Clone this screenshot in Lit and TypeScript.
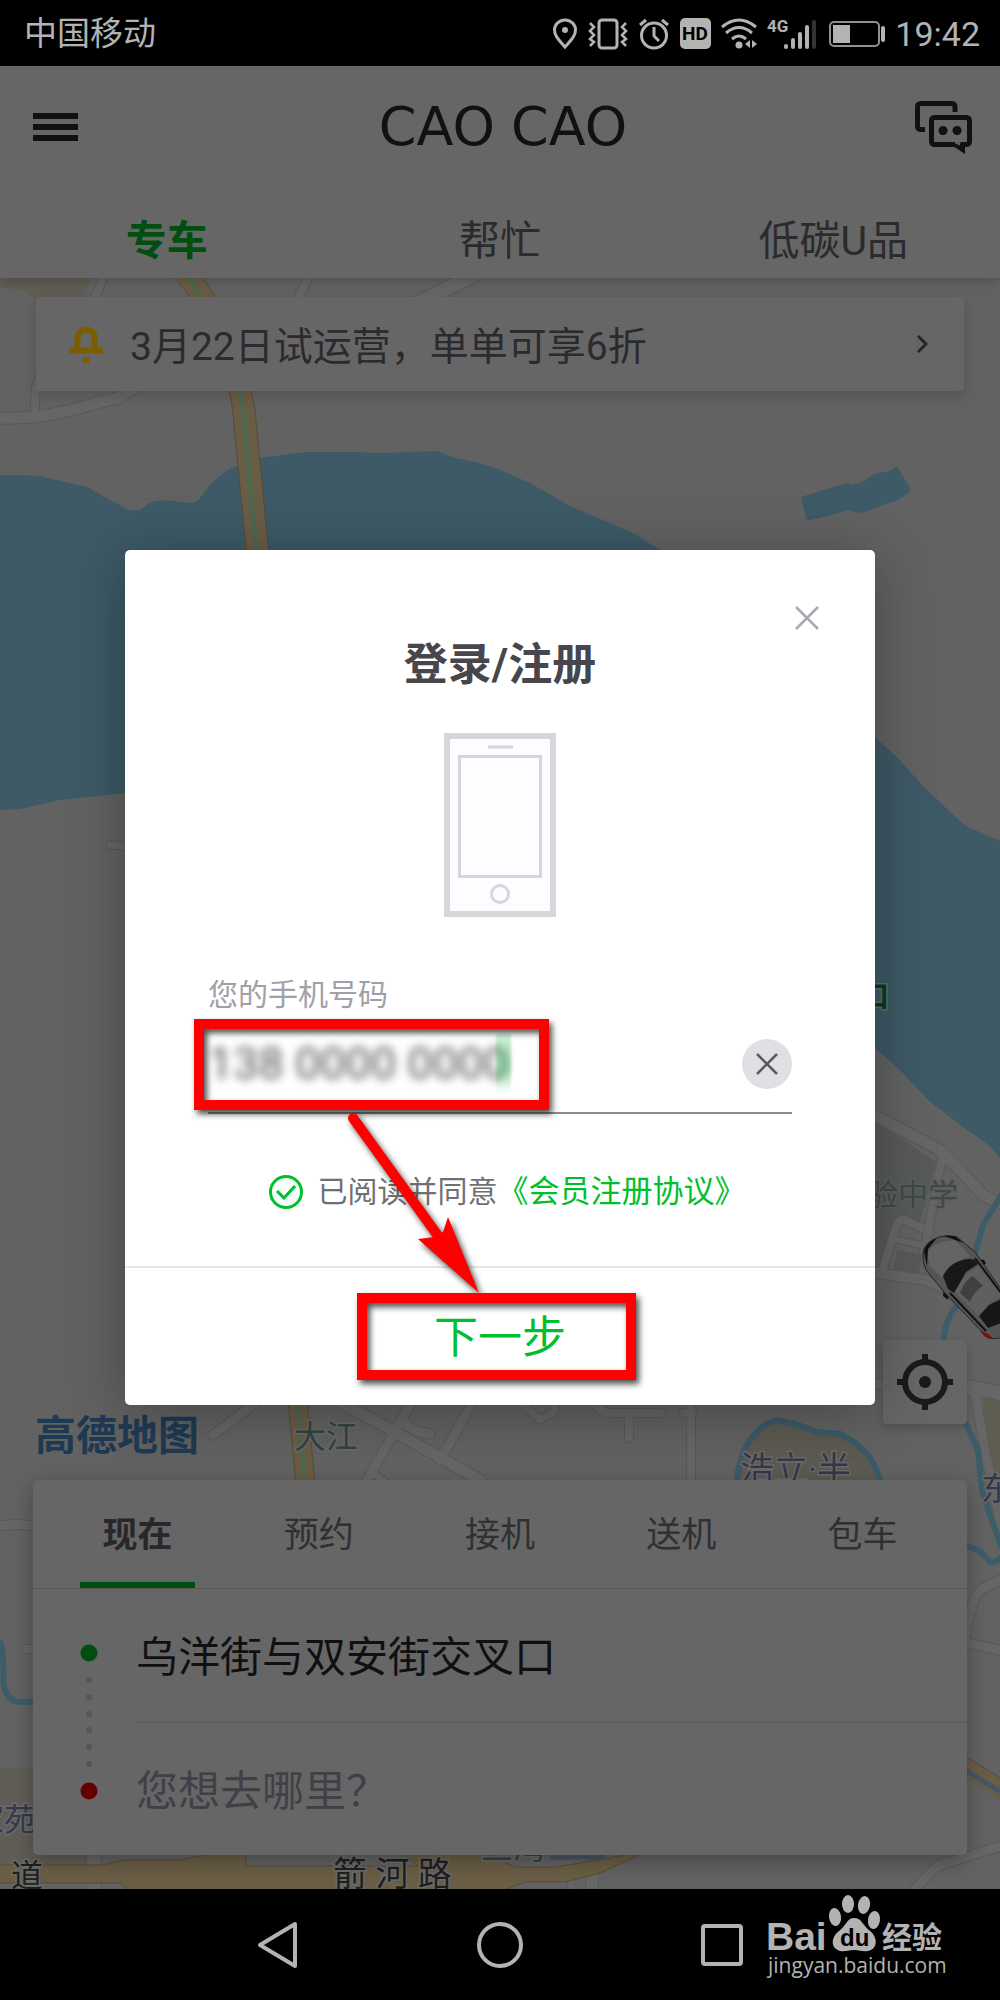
import { LitElement, html, svg, css } from "lit";
import { customElement, state } from "lit/decorators.js";
import { classMap } from "lit/directives/class-map.js";

const ROADS: Array<[string, number]> = [
  ["M106 270 93 304", 8],
  ["M308 270C309 285 300 288 297 304", 8],
  ["M484 270 420 302", 14],
  ["M48 370C34 378 35 392 35 414", 8],
  ["M-4 418C60 420 90 402 118 398L150 378", 11],
  ["M-4 1526C20 1524 26 1524 40 1527", 9],
  ["M110 845 134 847", 7],
  ["M26 1649H40", 8],
  ["M262 1398 213 1435", 9],
  ["M336 1400 395 1432 480 1480", 11],
  ["M413 1400 366 1482", 9],
  ["M374 1474 388 1484", 7],
  ["M402 1423 416 1431 430 1434", 9],
  ["M474 1400 440 1460", 9],
  ["M518 1400 540 1420 554 1412 556 1400", 7],
  ["M594 1404Q602 1413 612 1413H661", 8],
  ["M629 1413V1438", 8],
  ["M684 1413H692", 8],
  ["M691 1400V1484", 8],
  ["M868 1112 940 1150 960 1170 984 1196 1004 1204", 11],
  ["M942 1158 924 1252", 8],
  ["M882 1272 897 1224Q899 1219 905 1220L930 1232", 8],
  ["M898 1240 926 1246", 6],
  ["M868 1272 925 1280 950 1290", 10],
  ["M868 1383 890 1386", 9],
  ["M962 1386 1004 1394", 14],
  ["M975 1394 985 1450 1004 1540", 9],
  ["M1004 1578 982 1589Q976 1592 972 1606L964 1640", 9],
  ["M962 1642 1004 1651", 9],
  ["M912 1892 936 1867Q940 1864 950 1862L1004 1845", 9],
  ["M94 1850V1892", 14],
  ["M570 1880 574 1894", 7],
  ["M592 1872V1894", 11],
];

const TOP_TABS = ["专车", "帮忙", "低碳U品"];
const RIDE_TABS = ["现在", "预约", "接机", "送机", "包车"];

@customElement("city-map")
class CityMap extends LitElement {
  static styles = css`
    :host { display: block; overflow: hidden; background: #626262; }
    .canvas { display: block; width: 100%; height: 100%; }
    .label { font: 32px Roboto, "Noto Sans CJK SC", sans-serif; paint-order: stroke; stroke: #6a6a6a; stroke-width: 3px; }
    .green { fill: #34423f; }
    .violet { fill: #353849; }
    .dark { fill: #1f1f1f; }
    .wide { font-size: 34px; }
    .small { font-size: 30px; fill: #3d4a49; stroke: #5c5f5e; }
    .gate { font-size: 29px; font-weight: 700; fill: #003d22; }
  `;
  render() {
    return html`
      <svg class="canvas" viewBox="0 278 1000 1611" preserveAspectRatio="xMidYMid slice" aria-hidden="true">
        <path fill="#605d54" d="M0 278H92L80 300H36L24 290 0 287z" />
        <path fill="#605d56" d="M0 1768H40L86 1855V1865H0z" />
        <path fill="#575a58" d="M870 1118 936 1162 920 1222 894 1220 878 1268 870 1268z" />
        <path fill="#585a59" d="M897 1250 922 1254 918 1280 892 1277z" />
        <path fill="#5f5c50" d="M983 1397 1000 1403V1500L990 1460z" />
        <g fill="#3d5a66">
          <path d="M0 475C30 475 38 475 48 478L87 487 128 510H140C148 505 148 502 158 501 175 499 186 505 195 502 204 496 206 488 212 483 220 475 226 470 237 466L260 458 305 452 355 452 380 453 437 451 455 458 480 463 500 470 530 483 570 506 605 521 635 534 660 550 875 737 900 760Q920 784 942 804 960 822 968 827L1000 841V1158L990 1146 963 1127 929 1101 900 1070 875 1048 600 930 125 793 60 800 20 809 0 810z" />
          <path d="M801 497 847 483 852 485 862 482 875 474Q882 471 888 472L897 466 911 490Q905 497 895 501L880 506Q870 511 860 513L847 510 835 514 807 521z" />
        </g>
        <path fill="#5c5a51" stroke="#3b5a67" stroke-width="6" d="M736 1486C740 1450 748 1438 766 1424L778 1420 795 1424 817 1432 840 1434C868 1448 876 1464 882 1486" />
        <g fill="none" stroke-linejoin="round">
          ${ROADS.map(([d, w]) => svg`<path d=${d} stroke="#585858" stroke-linecap="round" stroke-width=${w + 2} />`)}
          ${ROADS.map(([d, w]) => svg`<path d=${d} stroke="#666" stroke-linecap="round" stroke-width=${w} />`)}
          <g stroke="#3d5c69" stroke-width="6">
            <path d="M1002 1194 983 1225 973 1260 957 1306Q945 1318 943 1345" />
            <path d="M962 1415 978 1450 982 1490 990 1515 1002 1548" />
            <path d="M962 1544 980 1551 990 1562Q994 1564 1002 1556" />
            <path d="M0 1640C6 1665 2 1675 4 1686Q8 1702 20 1702H40" />
          </g>
        </g>
        <g fill="#6a5d45" stroke="#584b38">
          <path d="M172 274H200L218 300H193z" />
          <path d="M228 384H250L255 410 269 556H247L232 405z" />
          <path d="M288 1400H307L315 1484H296z" />
          <path d="M-2 1865H102L122 1860H180L220 1852H246V1866H418L400 1850H480L515 1867H555Q600 1860 650 1850L600 1873 565 1882H525L500 1892H132L120 1883H-2z" />
          <path d="M960 1753 1004 1780V1795L960 1768z" />
        </g>
        <g fill="none">
          <path stroke="#4b6850" stroke-width="4" d="M186 272 202 300M239 388 243 410 257 556M297 1400 305 1484" />
          <path stroke="#485565" stroke-width="5" d="M960 1767 1004 1794M550 1857H605" />
          <path stroke="#6a5d45" stroke-width="4" d="M960 1773 1004 1800" />
        </g>
        <text class="label green" x="294" y="1448">大江</text>
        <text class="label violet wide" x="740" y="1481">浩立·半</text>
        <text class="label violet" x="981" y="1500">东</text>
        <text class="label small" x="868" y="1205">验中学</text>
        <text class="label gate" x="860" y="1007">口</text>
        <text class="label violet" x="-28" y="1831">家苑</text>
        <text class="label dark" x="11" y="1887">道</text>
        <text class="label dark wide" x="333" y="1886">箭 河 路</text>
        <text class="label green" x="481" y="1859">三湾</text>
        <g>
          <path fill="#111" d="M944 1287 949 1292 948 1300 943 1296zM976 1259 984 1260 986 1264 978 1266z" />
          <path fill="#555" stroke="#242424" d="M923 1252Q925 1242 939 1237 948 1234 957 1237L975 1252 1010 1302V1334Q1000 1340 988 1338L944 1292 926 1270Q922 1262 923 1252z" />
          <path fill="#646464" d="M927 1254Q930 1246 941 1242L955 1240 970 1256 950 1266 942 1278 930 1266z" />
          <path fill="#111" d="M924 1252Q925 1243 937 1238L928 1249 927 1266zM943 1236 955 1236 963 1243 950 1238z" />
          <path fill="#16181a" d="M943 1276Q948 1266 957 1262 968 1257 975 1260L978 1264 966 1272 954 1293 948 1289z" />
          <path fill="#5f5f5f" d="M955 1292 966 1274 978 1266 1002 1296 990 1303 979 1317z" />
          <path fill="#404040" d="M960 1293Q964 1281 973 1276L983 1286Q975 1290 970 1302z" />
          <path fill="#141618" d="M979 1316 989 1305 1004 1298V1322L988 1328z" />
          <path fill="none" stroke="#111" stroke-width="2" d="M975 1258 1002 1294M950 1293 986 1331" />
          <path fill="#7a0f14" d="M980 1331 987 1333 994 1339 985 1337z" />
        </g>
      </svg>
    `;
  }
}

@customElement("status-bar")
class StatusBar extends LitElement {
  static styles = css`
    :host { display: flex; align-items: center; justify-content: space-between; height: 66px; padding: 2px 20px 0 24px; box-sizing: border-box; background: #000; color: #b3b3b3; font: 33px/40px Roboto, "Noto Sans CJK SC", sans-serif; }
    .tray { display: flex; align-items: center; gap: 10px; }
    .time { font-size: 34px; }
    svg { display: block; }
    .badge { font: 700 19px Roboto, sans-serif; }
    .net { font: 700 17px Roboto, sans-serif; }
  `;
  render() {
    return html`
      <span>中国移动</span>
      <div class="tray">
        <svg width="26" height="32" viewBox="0 0 26 32" aria-hidden="true">
          <path fill="none" stroke="#b3b3b3" stroke-width="3" d="M13 29C7 22 2.500 18 2.500 12a10.500 10 0 0 1 21 0C23.500 18 19 22 13 29z" /><circle cx="13" cy="12" r="3" fill="#b3b3b3" />
        </svg>
        <svg width="40" height="32" viewBox="0 0 40 32" fill="none" stroke="#b3b3b3" stroke-width="3" aria-hidden="true">
          <rect x="11" y="2" width="18" height="28" rx="3" /><path stroke-width="2.500" d="M2 5l4 4-4 4 4 4-4 4 4 3-4 4M38 5l-4 4 4 4-4 4 4 4-4 3 4 4" />
        </svg>
        <svg width="32" height="32" viewBox="0 0 32 32" fill="none" stroke="#b3b3b3" stroke-width="3" aria-hidden="true">
          <circle cx="16" cy="17.500" r="12.500" /><path d="M16 9v9l5 5M2 7l6-5M30 7l-6-5" />
        </svg>
        <svg width="31" height="32" viewBox="0 0 31 32" aria-hidden="true">
          <rect width="31" height="31" rx="5" fill="#b3b3b3" /><text class="badge" x="15" y="22" text-anchor="middle" fill="#000">HD</text>
        </svg>
        <svg width="36" height="32" viewBox="0 0 36 32" fill="none" stroke="#b3b3b3" stroke-width="3" aria-hidden="true">
          <path d="M1 9Q18-5 35 9M5 15Q18 4 31 15M11 21Q18 15 25 21" /><circle cx="18" cy="27" r="3.500" fill="#b3b3b3" stroke="none" /><path fill="#b3b3b3" stroke="none" d="M24 26l5-4v8zM36 26l-5-4v8z" />
        </svg>
        <svg width="50" height="34" viewBox="0 0 50 34" aria-hidden="true">
          <text class="net" x="0" y="15" fill="#b3b3b3">4G</text>
          <g stroke="#b3b3b3" stroke-width="4" stroke-linecap="round"><path d="M19 29v1M26 23v7M33 17v13M40 10v20" /><path stroke="#333" d="M47 5v25" /></g>
        </svg>
        <svg width="58" height="28" viewBox="0 0 58 28" aria-hidden="true">
          <rect x="3" y="2" width="49" height="24" rx="4" fill="none" stroke="#909090" stroke-width="2" /><rect x="6" y="5" width="17" height="18" fill="#b3b3b3" /><rect x="54" y="6" width="4" height="16" rx="2" fill="#b3b3b3" />
        </svg>
        <time class="time">19:42</time>
      </div>
    `;
  }
}

@customElement("nav-bar")
class NavBar extends LitElement {
  static styles = css`
    :host { display: flex; position: relative; justify-content: center; align-items: center; height: 111px; background: #000; }
    .key { display: grid; place-items: center; flex: 0 1 222px; height: 80px; padding: 0; border: 0; background: none; }
    .mark { position: absolute; right: 52px; bottom: 20px; }
    .bai { font: 700 39px "Liberation Sans", sans-serif; }
    .du { font: 700 24px "Liberation Sans", sans-serif; }
    .jy { font: 700 30px "Noto Sans CJK SC", sans-serif; }
    .url { font: 21px "Open Sans", sans-serif; }
  `;
  render() {
    return html`
      <button class="key" aria-label="返回"><svg width="48" height="48" viewBox="0 0 48 48" fill="none" stroke="#b3b3b3" stroke-width="4" stroke-linejoin="round"><path d="M41 3V45L6 24z" /></svg></button>
      <button class="key" aria-label="主页"><svg width="48" height="48" viewBox="0 0 48 48" fill="none" stroke="#b3b3b3" stroke-width="4"><circle cx="24" cy="24" r="21" /></svg></button>
      <button class="key" aria-label="最近任务"><svg width="48" height="48" viewBox="0 0 48 48" fill="none" stroke="#b3b3b3" stroke-width="4"><rect x="5" y="5" width="38" height="38" rx="2" /></svg></button>
      <svg class="mark" width="184" height="88" viewBox="0 0 184 88" fill="#b3b3b3">
        <text class="bai" x="2" y="58">Bai</text>
        <ellipse cx="71" cy="25" rx="6" ry="9" transform="rotate(-8 71 25)" /><ellipse cx="84" cy="12" rx="6" ry="9" /><ellipse cx="100" cy="13" rx="6" ry="9" transform="rotate(10 100 13)" /><ellipse cx="110" cy="28" rx="6" ry="9" transform="rotate(8 110 28)" />
        <path d="M90 26C98 26 99 34 106 39 114 45 114 57 104 59 98 60 96 58 90 58S82 60 76 59C66 56 67 45 75 39 82 34 83 26 90 26z" />
        <text class="du" x="76" y="54" fill="#000">du</text>
        <text class="jy" x="118" y="56">经验</text>
        <text class="url" x="4" y="81">jingyan.baidu.com</text>
      </svg>
    `;
  }
}

@customElement("login-dialog")
class LoginDialog extends LitElement {
  @state() private phone = "138 0000 0000";
  static styles = css`
    :host { display: block; position: relative; width: 75%; border-radius: 5px; background: #fff; box-shadow: 0 8px 60px rgba(0, 0, 0, 0.3); font: 30px/40px Roboto, "Noto Sans CJK SC", sans-serif; }
    button { padding: 0; border: 0; background: none; font: inherit; cursor: pointer; }
    svg { display: block; }
    .close { position: absolute; top: 44px; right: 44px; display: grid; place-items: center; width: 48px; height: 48px; }
    .body { padding: 87px 83px 54px; }
    .title { margin: 0 0 40px; text-align: center; font-size: 44px; line-height: 56px; font-weight: 700; color: #46464c; }
    .device { margin: 0 auto 58px; }
    .caption { display: block; color: #a0a0a8; }
    .field { display: flex; align-items: center; height: 97px; border-bottom: 2px solid #8c8c8c; }
    .number { flex: 1; min-width: 0; padding: 0; border: 0; outline: 0; background: none; color: #555; font: 45px/60px Roboto, sans-serif; filter: blur(5px); }
    .clear { display: grid; place-items: center; width: 50px; height: 50px; border-radius: 50%; background: #dfe0e4; }
    .terms { display: flex; justify-content: center; align-items: center; margin-top: 58px; padding-left: 14px; color: #6f6f75; }
    .agree { display: flex; align-items: center; gap: 15px; }
    .tick { display: grid; place-items: center; }
    .tick > * { grid-area: 1 / 1; }
    .box { appearance: none; width: 34px; height: 34px; margin: 0; border: 3px solid #00bf2d; border-radius: 50%; background: #f6fff8; }
    .tick svg { pointer-events: none; }
    .link { color: #00bf2d; font-size: 31px; text-decoration: none; }
    .foot { border-top: 2px solid #e6e6e6; }
    .next { display: block; width: 100%; height: 137px; padding-top: 3px; color: #00bf2d; font-size: 44px; }
    .guide { position: absolute; inset: 0; width: 100%; height: 100%; pointer-events: none; filter: drop-shadow(3px 4px 3px rgba(0, 0, 0, 0.7)); }
    .caret { position: absolute; left: 371px; top: 484px; width: 15px; height: 60px; background: linear-gradient(rgba(0, 180, 50, 0.2), rgba(0, 180, 50, 0.3) 60%, rgba(0, 180, 50, 0)); filter: blur(1px); }
  `;
  render() {
    return html`
      <button class="close" aria-label="关闭"><svg width="24" height="24" viewBox="0 0 24 24" stroke="#a8a8ae" stroke-width="2.500"><path d="M1 1 23 23M23 1 1 23" /></svg></button>
      <div class="body">
        <h2 class="title">登录/注册</h2>
        <svg class="device" width="112" height="184" viewBox="0 0 112 184" fill="#fcfdff" stroke="#d5d7da" aria-hidden="true">
          <rect x="3" y="3" width="106" height="178" stroke-width="6" /><path stroke-width="3" d="M44 14H69" /><rect x="15.500" y="23.500" width="81" height="120" stroke-width="3" /><circle cx="56" cy="161" r="8.500" stroke-width="3" />
        </svg>
        <label class="caption" for="phone">您的手机号码</label>
        <div class="field">
          <input class="number" id="phone" type="tel" .value=${this.phone} @input=${(e: Event) => (this.phone = (e.target as HTMLInputElement).value)} />
          <button class="clear" aria-label="清除" @click=${() => (this.phone = "")}><svg width="22" height="22" viewBox="0 0 22 22" stroke="#5a5a5e" stroke-width="2.500"><path d="M1 1 21 21M21 1 1 21" /></svg></button>
        </div>
        <div class="terms">
          <label class="agree"><span class="tick"><input class="box" type="checkbox" checked /><svg width="20" height="16" viewBox="0 0 20 16" fill="none" stroke="#00bf2d" stroke-width="3"><path d="M1 7 8 14 19 2" /></svg></span>已阅读并同意</label><a class="link" href="#terms">《会员注册协议》</a>
        </div>
      </div>
      <div class="foot"><button class="next">下一步</button></div>
      <span class="caret"></span>
      <svg class="guide" viewBox="0 0 750 855" aria-hidden="true">
        <g fill="none" stroke="#f00" stroke-width="10"><rect x="74" y="474" width="345" height="81" /><rect x="237" y="748" width="269" height="77" /><path stroke-linecap="round" d="M228 568 316 690" /></g>
        <path fill="#f00" d="M354 743 293 689 310 687 318 682 323 667z" />
      </svg>
    `;
  }
}

@customElement("app-root")
class AppRoot extends LitElement {
  @state() private service = 0;
  @state() private ride = 0;
  static styles = css`
    :host { display: flex; flex-direction: column; min-height: 100vh; background: #000; font: 41px/56px Roboto, "Noto Sans CJK SC", sans-serif; color: #2b2b2e; }
    button { padding: 0; border: 0; background: none; font: inherit; color: inherit; cursor: pointer; }
    svg { display: block; }
    .app { flex: 1; display: grid; }
    .page, .scrim { grid-area: 1 / 1; min-width: 0; }
    .page { display: flex; flex-direction: column; }
    .scrim { display: grid; place-items: center; z-index: 3; }
    .header { position: relative; z-index: 1; background: #666; box-shadow: 0 3px 12px rgba(0, 0, 0, 0.2); }
    .bar { display: grid; grid-template-columns: 1fr auto 1fr; align-items: center; height: 122px; padding: 0 27px 0 33px; }
    .end { justify-self: end; }
    .start { justify-self: start; }
    .brand { display: flex; gap: 16px; margin: 0; color: #101112; font: 54px/64px "DejaVu Sans", sans-serif; }
    .services { display: grid; grid-template-columns: repeat(3, 1fr); padding: 25px 0 9px; }
    .services .on { font-weight: 700; color: #004f10; }
    .stage { position: relative; flex: 1; display: flex; flex-direction: column; box-sizing: border-box; padding: 19px 33px 34px; }
    .map { position: absolute; inset: 0; }
    .notice, .tools, .booking { position: relative; }
    .notice { display: flex; align-items: center; height: 94px; margin: 0 3px; padding: 0 36px 0 33px; border-radius: 4px; background: #666; box-shadow: 0 5px 14px rgba(0, 0, 0, 0.16); font-size: 39px; text-align: left; color: #2b2b2e; }
    .message { flex: 1; margin-left: 27px; padding-top: 5px; }
    .tools { display: flex; align-items: flex-end; justify-content: space-between; margin-top: auto; padding: 0 0 28px 2px; }
    .provider { font: 700 41px/40px "Noto Sans CJK SC", sans-serif; color: #1e3a52; }
    .locate { display: grid; place-items: center; width: 84px; height: 84px; margin-bottom: 28px; border-radius: 4px; background: #666; box-shadow: 0 4px 10px rgba(0, 0, 0, 0.2); }
    .booking { border-radius: 5px; background: #666; box-shadow: 0 6px 20px rgba(0, 0, 0, 0.3); }
    .rides { display: grid; grid-template-columns: repeat(5, 1fr); padding: 0 14px; border-bottom: 1px solid #565656; font-size: 35px; color: #303032; }
    .ride { display: flex; justify-content: center; height: 108px; }
    .word { display: grid; align-content: center; box-sizing: border-box; width: 115px; height: 108px; padding-top: 10px; border-bottom: 6px solid transparent; }
    .word.picked { border-color: #004f10; font-weight: 700; color: #28282b; }
    .trip { display: grid; grid-template-columns: 103px 1fr; align-items: center; }
    .rail { grid-row: 1 / 3; margin-left: 47px; }
    .place { height: 133px; padding-top: 5px; text-align: left; font-size: 42px; color: #101012; }
    .place + .place { border-top: 1px solid #5a5a5a; color: #404046; }
  `;
  render() {
    return html`
      <status-bar></status-bar>
      <div class="app">
        <div class="page">
          <header class="header">
            <div class="bar">
              <button class="start" aria-label="菜单"><svg width="45" height="28" viewBox="0 0 45 28" fill="#101112"><path d="M0 0H45V6H0zM0 11H45V17H0zM0 22H45V28H0z" /></svg></button>
              <h1 class="brand"><span>CAO</span><span>CAO</span></h1>
              <button class="end" aria-label="消息"><svg width="60" height="54" viewBox="0 0 60 54" fill="none" stroke="#101112" stroke-width="5"><path d="M12 29.500H7.500a3 3 0 0 1-3-3V6.500a3 3 0 0 1 3-3H39a3 3 0 0 1 3 3V12" /><rect x="18.500" y="17.500" width="38" height="27" rx="3" /><path fill="#101112" stroke="none" d="M40 46 52 54V44H40zM30 26a4.500 4.500 0 1 0 .1 0zM44 26a4.500 4.500 0 1 0 .1 0z" /><path stroke="#666" stroke-width="2" d="M42 42 46 44 47 41" /></svg></button>
            </div>
            <nav class="services">
              ${TOP_TABS.map((t, i) => html`<button class=${classMap({ on: i === this.service })} @click=${() => (this.service = i)}>${t}</button>`)}
            </nav>
          </header>
          <main class="stage">
            <city-map class="map"></city-map>
            <button class="notice">
              <svg width="34" height="38" viewBox="0 0 34 38" fill="none" stroke="#7b5c00" stroke-width="6" aria-hidden="true"><path d="M8.500 26V13a8.500 8.500 0 0 1 17 0V26M0 25.500H34" /><path fill="#7b5c00" stroke="none" d="M14 32H20V38H14z" /></svg>
              <span class="message">3月22日试运营，单单可享6折</span>
              <svg width="12" height="20" viewBox="0 0 12 20" fill="none" stroke="#252528" stroke-width="3" aria-hidden="true"><path d="M2 2 10 10 2 18" /></svg>
            </button>
            <div class="tools">
              <span class="provider">高德地图</span>
              <button class="locate" aria-label="定位"><svg width="56" height="56" viewBox="0 0 56 56" fill="none" stroke="#1a1a1c" stroke-width="6"><circle cx="28" cy="28" r="20" /><path d="M28 0V10M28 46V56M0 28H10M46 28H56" /><circle cx="28" cy="28" r="6" fill="#1a1a1c" stroke="none" /></svg></button>
            </div>
            <section class="booking">
              <nav class="rides">
                ${RIDE_TABS.map((t, i) => html`<button class="ride" @click=${() => (this.ride = i)}><span class="word ${classMap({ picked: i === this.ride })}">${t}</span></button>`)}
              </nav>
              <div class="trip">
                <svg class="rail" width="18" height="156" viewBox="0 0 18 156" aria-hidden="true">
                  <circle cx="9" cy="9" r="8.500" fill="#004f10" /><circle cx="9" cy="147" r="8.500" fill="#640000" />
                  ${[36, 53, 70, 86, 103, 120].map((y) => svg`<circle cx="9" cy=${y} r="3" fill="#565658" />`)}
                </svg>
                <button class="place">乌洋街与双安街交叉口</button>
                <button class="place">您想去哪里？</button>
              </div>
            </section>
          </main>
        </div>
        <div class="scrim"><login-dialog role="dialog" aria-label="登录/注册"></login-dialog></div>
      </div>
      <nav-bar></nav-bar>
    `;
  }
}
